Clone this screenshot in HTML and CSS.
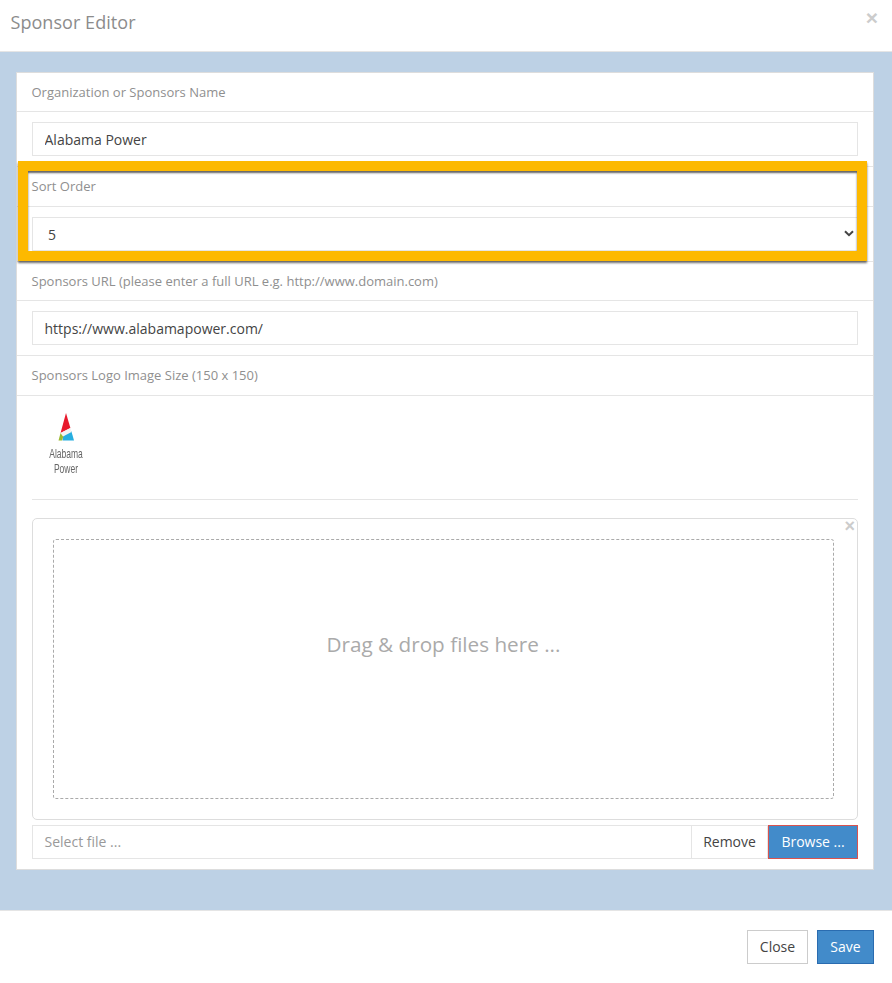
FILE: index.html
```html
<!DOCTYPE html>
<html lang="en">
<head>
<meta charset="utf-8">
<title>Sponsor Editor</title>
<link rel="stylesheet" href="styles.css">
</head>
<body>
<div class="modal">
  <header class="modal-header">
    <h1 class="modal-title">Sponsor Editor</h1>
    <span class="close-x">×</span>
  </header>
  <main class="modal-body">
    <section class="panel">
      <div class="field-label">Organization or Sponsors Name</div>
      <div class="field-body"><input class="control" type="text" value="Alabama Power"></div>
      <div class="field-label">Sort Order</div>
      <div class="field-body">
        <div class="select-wrap">
          <select class="control select"><option>5</option></select>
          <svg class="chevron" width="10" height="7" viewBox="0 0 10 7"><path d="M1 1.2 L5 5.2 L9 1.2" fill="none" stroke="#444" stroke-width="2"/></svg>
        </div>
      </div>
      <div class="field-label">Sponsors URL (please enter a full URL e.g. http://www.domain.com)</div>
      <div class="field-body"><input class="control" type="text" value="https://www.alabamapower.com/"></div>
      <div class="field-label">Sponsors Logo Image Size (150 x 150)</div>
      <div class="upload-body">
        <div class="logo">
          <svg class="logo-mark" width="18" height="28" viewBox="0 0 18 28">
            <polygon points="9,0 13.4,15 3.55,20" fill="#e8192c"/>
            <polygon points="14.3,18 17,27.5 5.5,27.5 6,23" fill="#27aee0"/>
            <polygon points="3.55,20 6.5,23 5,27.5 1.5,27.5" fill="#9cb92f"/>
            <polygon points="3.55,20 13.4,15 14.5,19 6,23.5" fill="#f3f3f3"/>
          </svg>
          <div class="logo-text">Alabama<br>Power</div>
        </div>
        <hr class="divider">
        <div class="file-box">
          <span class="box-x">×</span>
          <div class="dropzone">Drag &amp; drop files here ...</div>
        </div>
        <div class="file-group">
          <div class="file-caption">Select file ...</div>
          <button class="btn-remove" type="button">Remove</button>
          <button class="btn-browse" type="button">Browse ...</button>
        </div>
      </div>
    </section>
  </main>
  <footer class="modal-footer">
    <button class="btn btn-close" type="button">Close</button>
    <button class="btn btn-save" type="button">Save</button>
  </footer>
</div>
<div class="highlight"></div>
</body>
</html>
```
FILE: styles.css
```css
* { box-sizing: border-box; }
html, body { margin: 0; padding: 0; }
body {
  position: relative;
  width: 892px;
  height: 983px;
  background: #fff;
  font-family: "Open Sans", sans-serif;
  color: #444;
  overflow: hidden;
}
.modal-header {
  height: 52px;
  border-bottom: 1px solid #e5e5e5;
  position: relative;
  padding: 10px 10px 0 10.5px;
}
.modal-title {
  margin: 0;
  font-size: 18px;
  line-height: 25px;
  font-weight: 400;
  color: #8c8c8c;
  letter-spacing: 0.05px;
}
.close-x {
  position: absolute;
  top: 6px;
  right: 14px;
  font-family: "Liberation Sans", sans-serif;
  font-weight: 700;
  font-size: 21px;
  line-height: 24px;
  color: #ccc;
}
.modal-body {
  height: 858px;
  background: #bdd1e5;
  padding: 19.6px 18px 0 16px;
}
.panel {
  height: 798.4px;
  background: #fff;
  border: 1px solid #ddd;
}
.field-label {
  height: 39.5px;
  padding: 0 14.5px;
  font-size: 13px;
  line-height: 38px;
  color: #8f8f8f;
  border-bottom: 1px solid #e5e5e5;
}
.field-body {
  height: 55px;
  padding: 10px 15px;
  border-bottom: 1px solid #e5e5e5;
}
.control {
  display: block;
  width: 100%;
  height: 34px;
  padding: 0 12px 0 11.5px;
  border: 1px solid #e5e5e5;
  background: #fff;
  font-family: "Open Sans", sans-serif;
  font-size: 14px;
  color: #444;
  border-radius: 0;
  outline: none;
}
.select-wrap { position: relative; }
.select {
  appearance: none;
  -webkit-appearance: none;
  padding: 2px 0 0 15px;
}
.chevron {
  position: absolute;
  right: 4px;
  top: 13px;
}
.upload-body { padding: 0 15px; }
.logo {
  height: 103px;
  width: 68px;
  padding-top: 17px;
}
.logo-mark {
  display: block;
  margin: 0 auto;
  filter: blur(0.35px);
}
.logo-text {
  margin-top: 5px;
  font-family: "Liberation Sans", sans-serif;
  font-size: 13.5px;
  line-height: 15.5px;
  color: #666;
  text-align: center;
  white-space: nowrap;
  transform: scaleX(0.63);
  filter: blur(0.4px);
}
.divider {
  margin: 0 0 18px;
  border: 0;
  border-top: 1px solid #e5e5e5;
}
.file-box {
  position: relative;
  height: 302px;
  border: 1px solid #ddd;
  border-radius: 5px;
  padding: 20px 23px 20px 20px;
}
.box-x {
  position: absolute;
  top: -2px;
  right: 2px;
  font-family: "Liberation Sans", sans-serif;
  font-weight: 700;
  font-size: 18px;
  line-height: 18px;
  color: #ccc;
}
.dropzone {
  height: 260px;
  border: 1px dashed #aaa;
  border-radius: 3px;
  padding-top: 89px;
  text-align: center;
  font-size: 20.7px;
  line-height: 30px;
  color: #aaa;
}
.file-group {
  display: flex;
  height: 34px;
  margin-top: 5px;
  font-size: 14px;
}
.file-caption {
  flex: 1;
  border: 1px solid #e5e5e5;
  padding: 0 12px 0 11.5px;
  line-height: 32px;
  color: #999;
}
.file-group button {
  font-family: "Open Sans", sans-serif;
  font-size: 14px;
  height: 34px;
  padding: 0;
  border-radius: 0;
  cursor: pointer;
}
.btn-remove {
  width: 77px;
  margin-left: -1px;
  background: #fff;
  color: #444;
  border: 1px solid #e5e5e5;
}
.btn-browse {
  width: 90px;
  background: #428bca;
  color: #fff;
  border: 1px solid #d9534f;
}
.modal-footer {
  height: 73px;
  border-top: 1px solid #e5e5e5;
  padding: 19px 18px 0 0;
  display: flex;
  justify-content: flex-end;
  gap: 9px;
}
.btn {
  height: 34px;
  padding: 0 0 2px;
  font-family: "Open Sans", sans-serif;
  font-size: 14px;
  border-radius: 0;
}
.btn-close {
  width: 61px;
  background: #fff;
  color: #444;
  border: 1px solid #ccc;
}
.btn-save {
  width: 57px;
  background: #428bca;
  color: #fff;
  border: 1px solid #2a6cb0;
}
.highlight {
  position: absolute;
  left: 17.5px;
  top: 161px;
  width: 849.5px;
  height: 100px;
  border: 10px solid #fdb900;
  box-shadow: 0 2px 2px rgba(60,60,60,.75), inset 0 2px 2px rgba(60,60,60,.8);
  pointer-events: none;
}
```
